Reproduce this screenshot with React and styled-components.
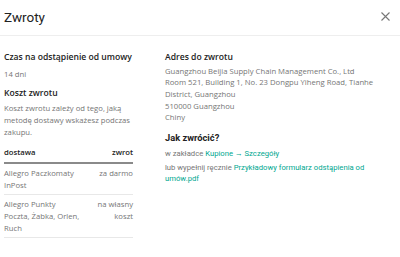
import React from "react";
import styled, { createGlobalStyle } from "styled-components";

const Global = createGlobalStyle`
  body {
    margin: 0;
    background: #fff;
    font-family: "Open Sans", sans-serif;
    color: #222;
  }
`;

const Header = styled.header`
  height: 33px;
  display: flex;
  align-items: center;
  justify-content: space-between;
  padding: 0 9px 2px 4px;
  border-bottom: 1px solid #eeeeee;
  h1 {
    margin: 0;
    font-family: Roboto, sans-serif;
    font-weight: 400;
    font-size: 13.5px;
    color: #222;
  }
`;

const Close = styled.button`
  border: 0;
  background: none;
  padding: 0;
  width: 12px;
  height: 12px;
  display: flex;
  align-items: center;
  justify-content: center;
  color: #777;
`;

const Body = styled.div`
  display: grid;
  grid-template-columns: 129px 1fr;
  column-gap: 32px;
  padding: 15px 4px 0 4px;
`;

const Section = styled.section`
  margin-bottom: ${p => p.gap ?? 10}px;
`;

const Title = styled.h3`
  margin: 0 0 ${p => p.mb ?? 3}px;
  font-size: ${p => (p.alt ? 9.3 : 8.6)}px;
  font-weight: ${p => (p.alt ? 700 : 600)};
  font-family: ${p => (p.alt ? "Roboto, sans-serif" : '"Open Sans", sans-serif')};
  line-height: 13px;
  color: #222;
`;

const Text = styled.p`
  margin: 0;
  font-size: 7.7px;
  line-height: ${p => p.lh || 12}px;
  color: #767676;
  font-family: ${p => (p.roboto ? "Roboto, sans-serif" : '"Open Sans", sans-serif')};
  margin-bottom: ${p => p.mb || 0}px;
`;

const Link = styled.a`
  color: #00a790;
  text-decoration: none;
`;

const Table = styled.div`
  display: flex;
  flex-direction: column;
`;

const Row = styled.div`
  display: flex;
  justify-content: space-between;
  align-items: flex-start;
  padding: ${p => (p.head ? "4px 0 4px" : "3px 0 3px")};
  border-bottom: ${p => (p.head ? "2px solid #8a8a8a" : "1px solid #e8e8e8")};
  font-size: 7.7px;
  line-height: 12px;
  color: ${p => (p.head ? "#222" : "#767676")};
  font-weight: ${p => (p.head ? 600 : 400)};
`;

const Cell = styled.span`
  max-width: ${p => (p.right ? 50 : 77)}px;
  text-align: ${p => (p.right ? "right" : "left")};
`;

export default function App() {
  return (
    <>
      <Global />
      <Header>
        <h1>Zwroty</h1>
        <Close aria-label="Zamknij">
          <svg width="9" height="9" viewBox="0 0 9 9">
            <path d="M0.5 0.5 L8.5 8.5 M8.5 0.5 L0.5 8.5" stroke="#777" strokeWidth="1.1" />
          </svg>
        </Close>
      </Header>
      <Body>
        <div>
          <Section gap={7}>
            <Title mb={3.5}>Czas na odstąpienie od umowy</Title>
            <Text>14 dni</Text>
          </Section>
          <Section gap={4}>
            <Title mb={2}>Koszt zwrotu</Title>
            <Text>Koszt zwrotu zależy od tego, jaką metodę dostawy wskażesz podczas zakupu.</Text>
          </Section>
          <Table>
            <Row head>
              <Cell>dostawa</Cell>
              <Cell right>zwrot</Cell>
            </Row>
            <Row>
              <Cell>Allegro Paczkomaty InPost</Cell>
              <Cell right>za darmo</Cell>
            </Row>
            <Row>
              <Cell>Allegro Punkty Poczta, Żabka, Orlen, Ruch</Cell>
              <Cell right>na własny koszt</Cell>
            </Row>
          </Table>
        </div>
        <div>
          <Section gap={7}>
            <Title mb={1.5}>Adres do zwrotu</Title>
            <Text lh={11.7}>
              Guangzhou Beijia Supply Chain Management Co., Ltd
              <br />
              Room 521, Building 1, No. 23 Dongpu Yiheng Road, Tianhe District, Guangzhou
              <br />
              510000 Guangzhou
              <br />
              Chiny
            </Text>
          </Section>
          <Section>
            <Title alt mb={4}>Jak zwrócić?</Title>
            <Text roboto lh={11} mb={3}>
              w zakładce <Link href="#">Kupione → Szczegóły</Link>
            </Text>
            <Text roboto lh={11}>
              lub wypełnij ręcznie <Link href="#">Przykładowy formularz odstąpienia od umów.pdf</Link>
            </Text>
          </Section>
        </div>
      </Body>
    </>
  );
}
